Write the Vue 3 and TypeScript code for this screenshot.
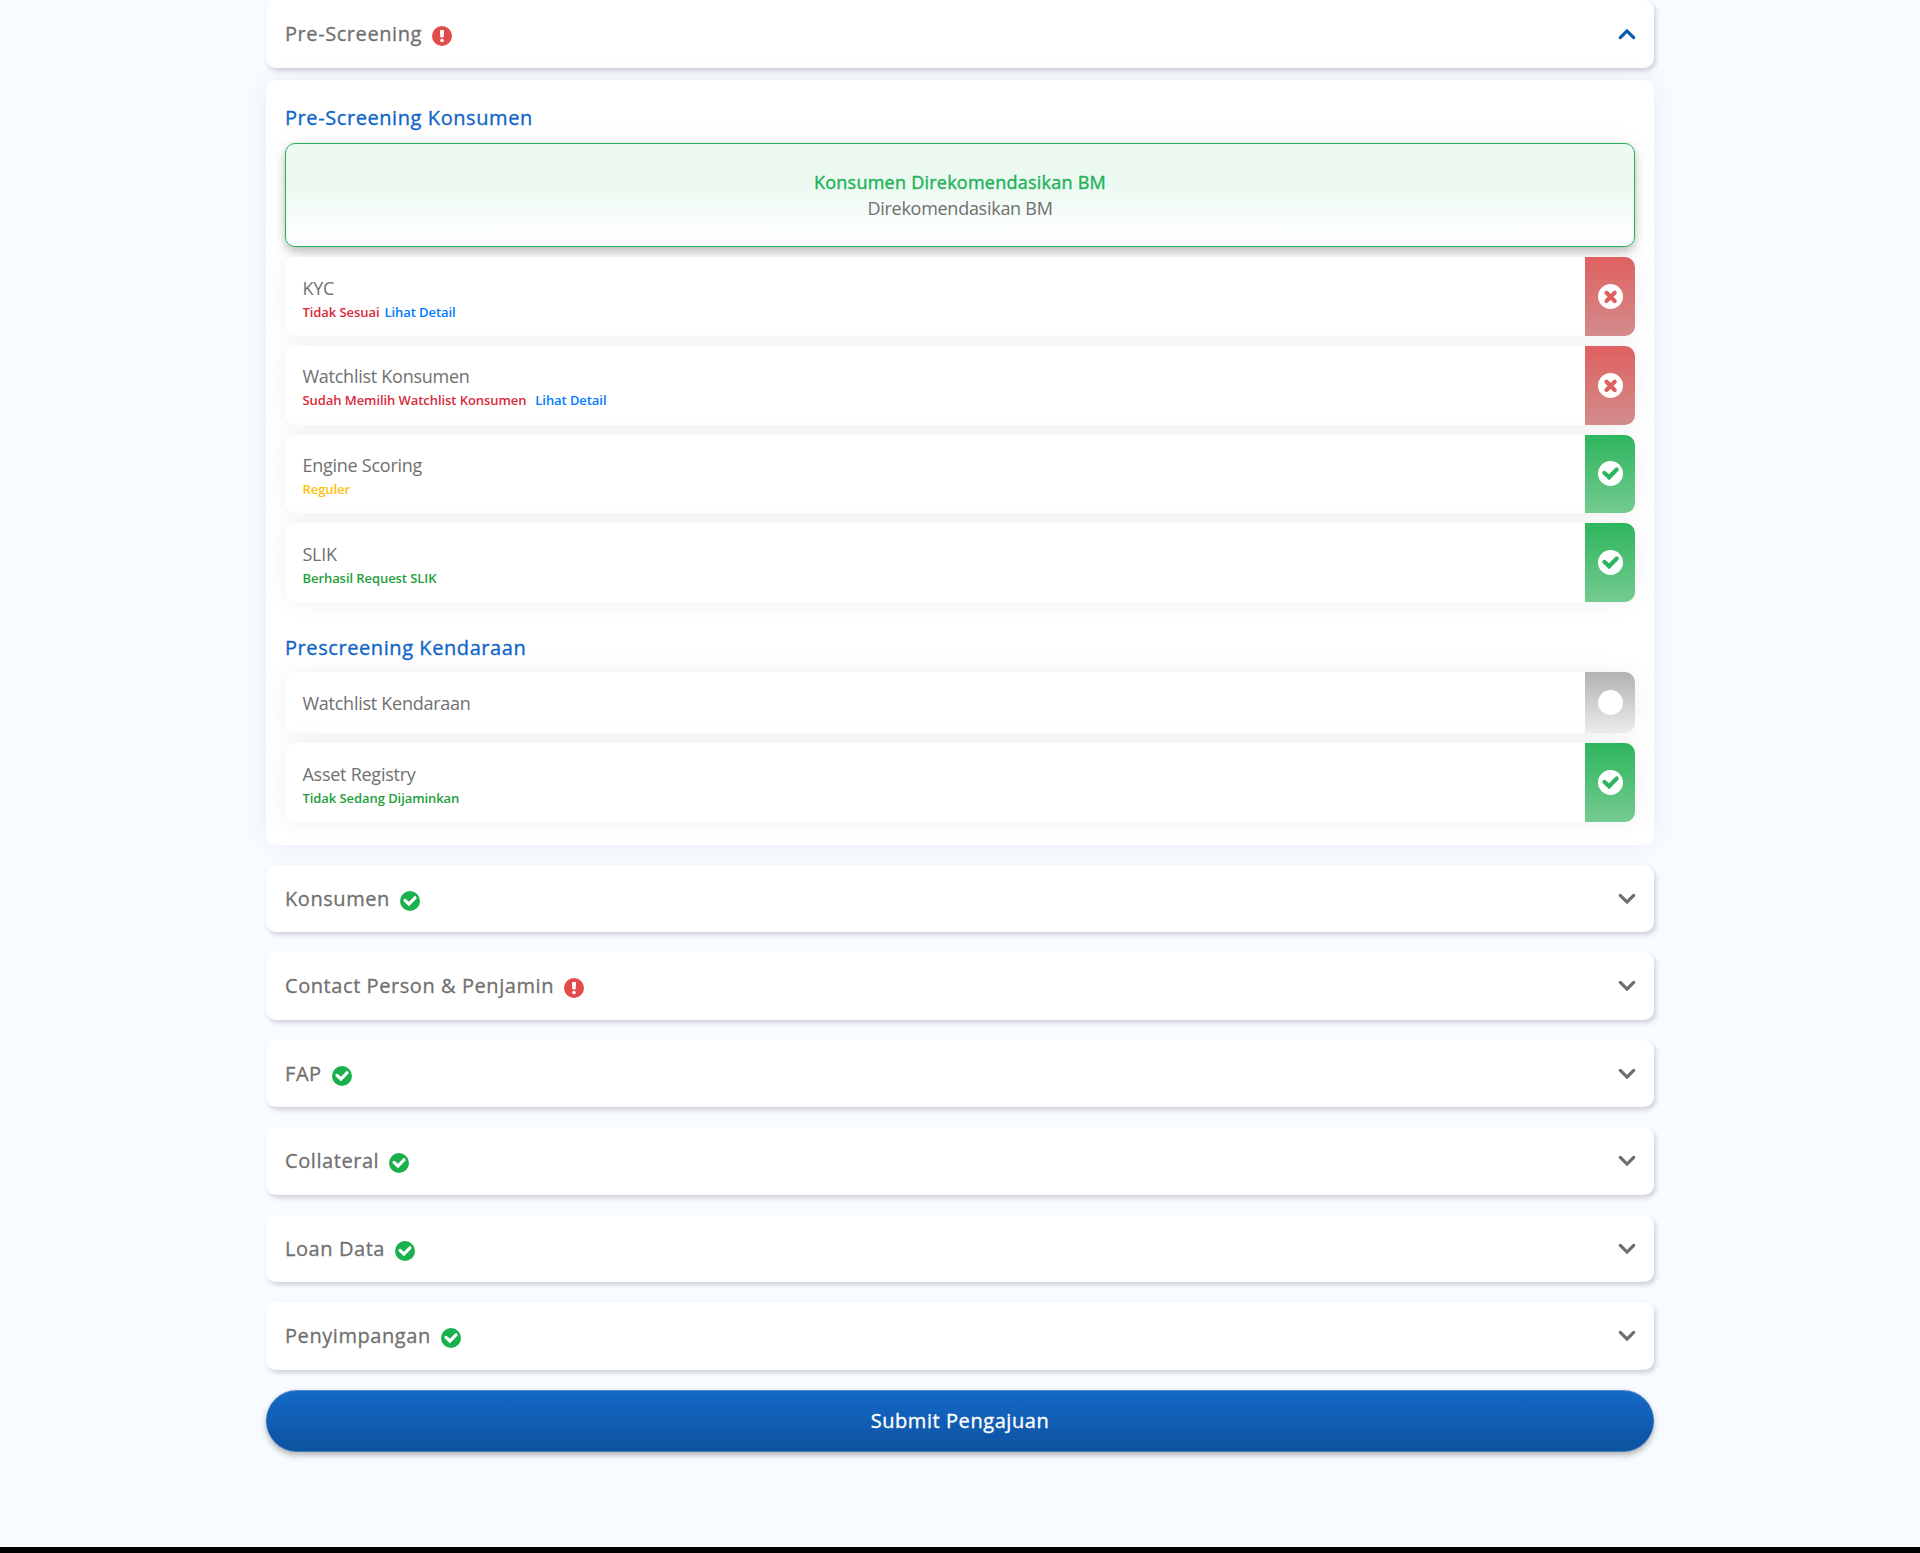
<script setup lang="ts">
type State = 'ok' | 'bad' | 'none'
interface Note { text: string; tone: string }
interface Check { title: string; state: State; notes: Note[]; wide?: boolean }

const customer: Check[] = [
  { title: 'KYC', state: 'bad', notes: [{ text: 'Tidak Sesuai', tone: 'danger' }, { text: 'Lihat Detail', tone: 'link' }] },
  { title: 'Watchlist Konsumen', state: 'bad', wide: true, notes: [{ text: 'Sudah Memilih Watchlist Konsumen', tone: 'danger' }, { text: 'Lihat Detail', tone: 'link' }] },
  { title: 'Engine Scoring', state: 'ok', notes: [{ text: 'Reguler', tone: 'warning' }] },
  { title: 'SLIK', state: 'ok', notes: [{ text: 'Berhasil Request SLIK', tone: 'success' }] },
]
const vehicle: Check[] = [
  { title: 'Watchlist Kendaraan', state: 'none', notes: [] },
  { title: 'Asset Registry', state: 'ok', notes: [{ text: 'Tidak Sedang Dijaminkan', tone: 'success' }] },
]
const groups = [
  { heading: 'Pre-Screening Konsumen', banner: true, rows: customer },
  { heading: 'Prescreening Kendaraan', banner: false, rows: vehicle },
]
const sections = [
  { title: 'Konsumen', ok: true },
  { title: 'Contact Person & Penjamin', ok: false },
  { title: 'FAP', ok: true },
  { title: 'Collateral', ok: true },
  { title: 'Loan Data', ok: true },
  { title: 'Penyimpangan', ok: true },
]
</script>

<template>
  <main class="page">
    <div class="content">
      <header class="bar first">
        <span class="name">Pre-Screening</span>
        <svg class="mark" viewBox="0 0 20 20">
          <circle cx="10" cy="10" r="10" fill="#e14b4b" />
          <path d="M8.6 4.1h2.8q.7 0 .65.7l-.4 6q-.05.8-.8.8h-1.7q-.75 0-.8-.8l-.4-6q-.05-.7.65-.7z" fill="#fff" />
          <circle cx="10" cy="14.5" r="1.8" fill="#fff" />
        </svg>
        <svg class="chevron open" viewBox="0 0 18 12"><path d="M2.3 2.4 9 9.1l6.7-6.7" /></svg>
      </header>

      <section class="panel">
        <div v-for="g in groups" :key="g.heading" class="group">
          <h2>{{ g.heading }}</h2>
          <div v-if="g.banner" class="banner">
            <strong>Konsumen Direkomendasikan BM</strong>
            <span>Direkomendasikan BM</span>
          </div>
          <article v-for="r in g.rows" :key="r.title" class="row" :class="{ short: !r.notes.length }">
            <div class="info">
              <div class="title">{{ r.title }}</div>
              <div v-if="r.notes.length" class="notes" :class="{ wide: r.wide }">
                <span v-for="n in r.notes" :key="n.text" :class="n.tone">{{ n.text }}</span>
              </div>
            </div>
            <div class="status" :class="r.state">
              <svg viewBox="0 0 25 25">
                <circle cx="12.5" cy="12.5" r="12.5" fill="#fff" />
                <path v-if="r.state === 'ok'" d="M6.3 11.8 11.1 16.3 18.7 8.5" stroke="#2db55d" stroke-width="4.1" stroke-linecap="round" fill="none" />
                <path v-if="r.state === 'bad'" d="M8.5 8.8l8.2 8.2M16.7 8.8 8.5 17" stroke="#e06060" stroke-width="4.2" stroke-linecap="round" fill="none" />
              </svg>
            </div>
          </article>
        </div>
      </section>

      <div class="sections">
        <div v-for="s in sections" :key="s.title" class="bar">
          <span class="name">{{ s.title }}</span>
          <svg class="mark" viewBox="0 0 20 20">
            <circle cx="10" cy="10" r="10" :fill="s.ok ? '#1bb04e' : '#e14b4b'" />
            <path v-if="s.ok" d="M5 9.4 8.9 13 15 6.8" stroke="#fff" stroke-width="3.2" stroke-linecap="round" fill="none" />
            <template v-else>
              <path d="M8.6 4.1h2.8q.7 0 .65.7l-.4 6q-.05.8-.8.8h-1.7q-.75 0-.8-.8l-.4-6q-.05-.7.65-.7z" fill="#fff" />
              <circle cx="10" cy="14.5" r="1.8" fill="#fff" />
            </template>
          </svg>
          <svg class="chevron" viewBox="0 0 18 12"><path d="M2.3 2.4 9 9.1l6.7-6.7" /></svg>
        </div>
      </div>

      <button class="submit" type="button">Submit Pengajuan</button>
    </div>
    <div class="footer"></div>
  </main>
</template>

<style>
body { background: #f8fbff; }
</style>

<style scoped>
* { box-sizing: border-box; }
.page {
  height: 1553px;
  display: flex;
  flex-direction: column;
  overflow: hidden;
  background: #f8fbff;
  color: #707070;
  font-family: "Open Sans", "Noto Sans", sans-serif;
}
.content { width: 1388px; margin: 0 auto; flex: 1; }
.bar {
  height: 67.5px;
  display: flex;
  align-items: center;
  padding: 0 18px 0 19px;
  background: #fff;
  border-radius: 10px;
  box-shadow: 2px 3px 5px rgba(0, 0, 0, .17);
}
.first { height: 68px; }
.name { font-size: 20px; line-height: 30px; letter-spacing: .57px; -webkit-text-stroke: .3px currentColor; }
.mark { width: 20px; height: 20px; margin: 4px 0 0 10px; }
.chevron { width: 18px; height: 12px; margin-left: auto; }
.chevron path { fill: none; stroke: #6d6d6d; stroke-width: 3.2; stroke-linecap: round; }
.chevron.open { transform: rotate(180deg); }
.chevron.open path { stroke: #0a5cab; }
.panel {
  height: 765px;
  margin: 12px 0 19.8px;
  padding: 23px 19px 0;
  background: #fff;
  border-radius: 10px;
  box-shadow: 0 0 25px rgba(50, 70, 130, .07);
}
h2 {
  margin: 0 0 10px;
  color: #1065c8;
  font-size: 20px;
  font-weight: 400;
  line-height: 30px;
  letter-spacing: .58px;
  -webkit-text-stroke: .35px currentColor;
}
.group + .group { margin-top: 31px; }
.group + .group h2 { margin-bottom: 9px; }
.banner {
  height: 104px;
  margin-bottom: 10.2px;
  display: flex;
  flex-direction: column;
  align-items: center;
  justify-content: center;
  border: 1px solid #22b358;
  border-radius: 10px;
  background: linear-gradient(#ebf9f0 0%, #ecf9f1 40%, #fff 95%);
  box-shadow: 0 4px 10px rgba(0, 0, 0, .25), 0 0 30px rgba(0, 0, 0, .04);
  font-size: 18px;
  line-height: 26px;
  letter-spacing: -.27px;
}
.banner strong { color: #22b358; font-weight: 400; letter-spacing: .24px; -webkit-text-stroke: .4px currentColor; }
.row {
  height: 78.7px;
  display: flex;
  background: #fff;
  border-radius: 10px;
  box-shadow: 0 0 25px rgba(0, 0, 0, .06);
}
.row + .row { margin-top: 10px; }
.row.short { height: 61px; }
.info { flex: 1; display: flex; flex-direction: column; justify-content: center; padding: 3px 0 0 17.5px; }
.short .info { padding-top: 3px; }
.short + .row .info { padding-top: 4.4px; }
.title { font-size: 18px; line-height: 27px; letter-spacing: -.26px; }
.notes { display: flex; gap: 5px; font-size: 13px; font-weight: 600; line-height: 20px; letter-spacing: -.07px; }
.notes.wide { gap: 9px; }
.danger { color: #d92a3b; }
.link { color: #007bff; }
.warning { color: #ffc107; }
.success { color: #1ea03c; }
.status { width: 50px; display: flex; align-items: center; justify-content: center; border-radius: 0 10px 10px 0; }
.status svg { width: 25px; height: 25px; }
.ok { background: linear-gradient(#2db55d, #75cb91); }
.bad { background: linear-gradient(#e06060, #d38c8c); }
.none { background: linear-gradient(#b2b2b2, #ececec); }
.sections { display: flex; flex-direction: column; gap: 20px; }
.submit {
  display: block;
  width: 100%;
  height: 62.7px;
  margin-top: 20px;
  border: 0;
  border-radius: 32px;
  background: linear-gradient(#1569c8, #0d529e);
  box-shadow: 0 3px 6px rgba(0, 0, 0, .3), inset 0 1px rgba(255, 255, 255, .25), inset 0 -1px rgba(255, 255, 255, .25);
  color: #fff;
  font: 400 20px/30px "Open Sans", "Noto Sans", sans-serif;
  letter-spacing: .57px;
  -webkit-text-stroke: .35px currentColor;
}
.footer { height: 6px; background: #000; }
</style>
